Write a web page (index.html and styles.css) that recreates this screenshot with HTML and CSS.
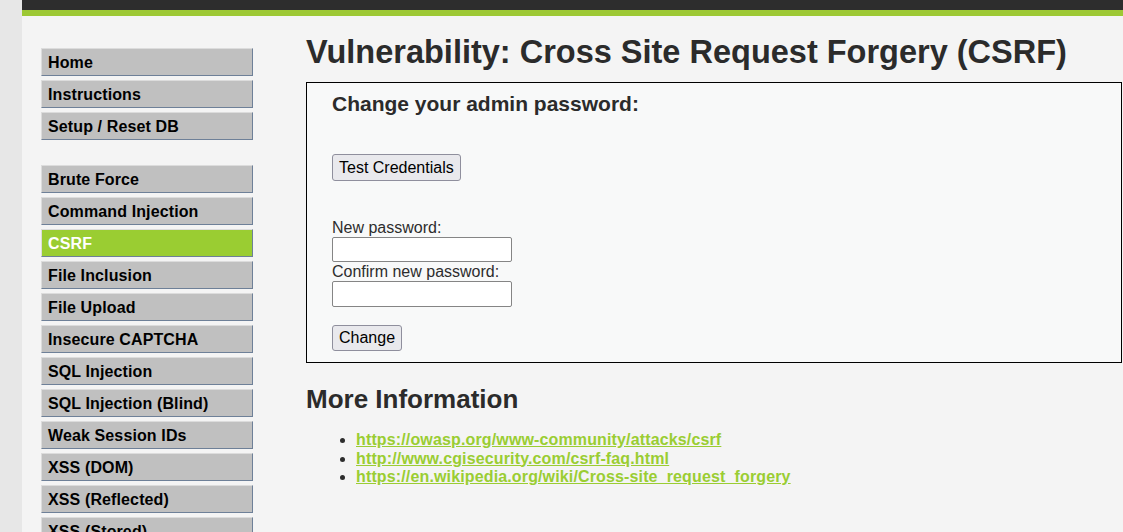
FILE: index.html
```html
<!DOCTYPE html>
<html>
<head>
<meta charset="utf-8">
<title>Vulnerability: Cross Site Request Forgery (CSRF)</title>
<link rel="stylesheet" href="styles.css">
</head>
<body>
<div class="wrapper">
  <div class="header"></div>
  <div class="layout">
    <nav class="menu">
      <ul class="group">
        <li><a href="#">Home</a></li>
        <li><a href="#">Instructions</a></li>
        <li><a href="#">Setup / Reset DB</a></li>
      </ul>
      <ul class="group">
        <li><a href="#">Brute Force</a></li>
        <li><a href="#">Command Injection</a></li>
        <li class="selected"><a href="#">CSRF</a></li>
        <li><a href="#">File Inclusion</a></li>
        <li><a href="#">File Upload</a></li>
        <li><a href="#">Insecure CAPTCHA</a></li>
        <li><a href="#">SQL Injection</a></li>
        <li><a href="#">SQL Injection (Blind)</a></li>
        <li><a href="#">Weak Session IDs</a></li>
        <li><a href="#">XSS (DOM)</a></li>
        <li><a href="#">XSS (Reflected)</a></li>
        <li><a href="#">XSS (Stored)</a></li>
        <li><a href="#">CSP Bypass</a></li>
        <li><a href="#">JavaScript</a></li>
      </ul>
    </nav>
    <main class="main">
      <h1 class="title">Vulnerability: Cross Site Request Forgery (CSRF)</h1>
      <div class="vuln-box">
        <h3 class="box-title">Change your admin password:</h3>
        <button class="btn btn-test" type="button">Test Credentials</button>
        <form class="pw-form" action="#">
          <label class="field-label">New password:</label>
          <input class="field" type="password">
          <label class="field-label field-label-2">Confirm new password:</label>
          <input class="field field-2" type="password">
          <button class="btn btn-change" type="button">Change</button>
        </form>
      </div>
      <h2 class="more-title">More Information</h2>
      <ul class="links">
        <li><a href="#">https://owasp.org/www-community/attacks/csrf</a></li>
        <li><a href="#">http://www.cgisecurity.com/csrf-faq.html</a></li>
        <li><a href="#">https://en.wikipedia.org/wiki/Cross-site_request_forgery</a></li>
      </ul>
    </main>
  </div>
</div>
</body>
</html>
```
FILE: styles.css
```css
html, body {
  margin: 0;
  padding: 0;
  height: 100%;
  overflow: hidden;
}
body {
  background: #e7e7e7;
  font-family: "Liberation Sans", Arial, sans-serif;
  font-size: 16px;
  color: #2d2d2d;
}
.wrapper {
  margin-left: 22px;
  background: #f4f4f4;
  min-height: 100%;
}
.header {
  height: 10px;
  background: #2d2d2d;
  border-bottom: 6px solid #9dc834;
}
.layout {
  display: flex;
  align-items: flex-start;
}
.menu {
  width: 212px;
  margin-left: 19px;
  padding-top: 32px;
  flex: none;
}
.group {
  list-style: none;
  margin: 0 0 25px 0;
  padding: 0;
}
.group li {
  margin: 0 0 4px 0;
}
.group li a {
  display: block;
  box-sizing: border-box;
  height: 28px;
  line-height: 27px;
  padding-left: 6px;
  background: #c0c0c0;
  border-top: 1px solid #dcdcdc;
  border-left: 1px solid #dcdcdc;
  border-right: 1px solid #6e8098;
  border-bottom: 1px solid #6e8098;
  color: #000;
  font-weight: bold;
  font-size: 16px;
  letter-spacing: 0.12px;
  text-decoration: none;
}
.group li.selected a {
  background: #9acd32;
  color: #fff;
}
.main {
  margin-left: 53px;
  width: 816px;
  flex: none;
}
.title {
  margin: 18px 0 11px 0;
  font-size: 32.5px;
  line-height: 37px;
  font-weight: bold;
  color: #2b2b2b;
  white-space: nowrap;
}
.vuln-box {
  border: 1px solid #000;
  background: #f8f9f9;
  padding: 0 0 11px 25px;
}
.box-title {
  margin: 9px 0 0 0;
  font-size: 21px;
  line-height: 24px;
  font-weight: bold;
  color: #2b2b2b;
}
.btn {
  display: block;
  box-sizing: border-box;
  font-family: "Liberation Sans", Arial, sans-serif;
  font-size: 16px;
  color: #000;
  background: #e9e9ed;
  border: 1px solid #8f8f9d;
  border-radius: 3px;
  padding: 0 6px;
}
.btn-test {
  margin-top: 38px;
  height: 27px;
}
.pw-form {
  margin: 38px 0 0 0;
  display: flex;
  flex-direction: column;
  align-items: flex-start;
}
.field-label {
  display: block;
  line-height: 18px;
  height: 18px;
  color: #2d2d2d;
}
.field-label-2 {
  height: 19px;
  padding-top: 1px;
  box-sizing: border-box;
}
.field {
  box-sizing: border-box;
  width: 180px;
  height: 25px;
  margin: 0;
  border: 1px solid #858585;
  border-radius: 2px;
  background: #fff;
}
.field-2 {
  height: 26px;
}
.btn-change {
  margin-top: 18px;
  height: 26px;
}
.more-title {
  margin: 21px 0 0 0;
  font-size: 26px;
  line-height: 30px;
  font-weight: bold;
  color: #2b2b2b;
}
.links {
  margin: 17px 0 0 0;
  padding-left: 50px;
}
.links li {
  line-height: 18px;
}
.links li + li {
  margin-top: 0.5px;
}
.links a {
  color: #9acd32;
  font-weight: bold;
  letter-spacing: 0.14px;
  text-decoration: underline;
}
```
